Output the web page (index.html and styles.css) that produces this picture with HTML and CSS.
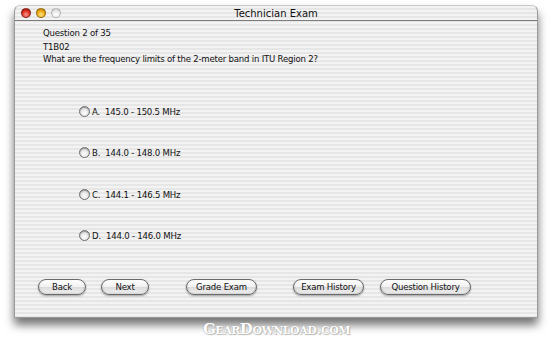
FILE: index.html
```html
<!DOCTYPE html>
<html lang="en">
<head>
    <meta charset="UTF-8">
    <title>Technician Exam</title>
    <link rel="stylesheet" href="styles.css">
</head>
<body>
    <div class="window">
        <div class="titlebar">
            <div class="lights">
                <span class="light red"></span>
                <span class="light yellow"></span>
                <span class="light gray"></span>
            </div>
            <div class="title">Technician Exam</div>
        </div>
        <div class="content">
            <p class="counter">Question 2 of 35</p>
            <p class="code">T1B02</p>
            <p class="question">What are the frequency limits of the 2-meter band in ITU Region 2?</p>

            <div class="answers">
                <label class="answer"><span class="radio"></span>A.&nbsp; 145.0 - 150.5 MHz</label>
                <label class="answer"><span class="radio"></span>B.&nbsp; 144.0 - 148.0 MHz</label>
                <label class="answer"><span class="radio"></span>C.&nbsp; 144.1 - 146.5 MHz</label>
                <label class="answer"><span class="radio"></span>D.&nbsp; 144.0 - 146.0 MHz</label>
            </div>

            <div class="buttons">
                <button class="btn w48">Back</button>
                <button class="btn w48 gap-s">Next</button>
                <button class="btn w71 gap-l">Grade Exam</button>
                <button class="btn w71 gap-m">Exam History</button>
                <button class="btn w91 gap-t">Question History</button>
            </div>
        </div>
    </div>
    <div class="watermark">GearDownload.com</div>
</body>
</html>
```

FILE: styles.css
```css
body { margin: 0; background: #fff; font-family: "DejaVu Sans Condensed", "DejaVu Sans", sans-serif; font-size: 9.5px; letter-spacing: -0.2px; color: #111; }

.window {
    margin: 5px 0 0 14px;
    width: 522px;
    height: 311px;
    border: 1px solid #9a9a9a;
    border-top-color: #c8c8c8;
    border-radius: 6px 6px 0 0;
    background: repeating-linear-gradient(#f3f3f3 0 2px, #e6e6e6 2px 4px);
    box-shadow: 0 7px 10px rgba(0, 0, 0, 0.55);
    display: flex;
    flex-direction: column;
    overflow: hidden;
}

.titlebar {
    height: 14px;
    border-bottom: 1px solid #7c7c7c;
    display: flex;
    align-items: center;
    position: relative;
}
.lights { display: flex; gap: 5px; padding-left: 6px; }
.light { width: 10px; height: 10px; border-radius: 50%; border: 1px solid rgba(0,0,0,0.35); box-sizing: border-box; }
.red { background: radial-gradient(circle at 50% 70%, #ff9a8e, #d2281c 60%, #9a1208); }
.yellow { background: radial-gradient(circle at 50% 70%, #ffe680, #e8a20c 60%, #a86c00); }
.gray { background: radial-gradient(circle at 50% 70%, #ffffff, #e4e4e4 60%, #b8b8b8); border-color: rgba(0,0,0,0.2); }
.title { position: absolute; left: 0; right: 0; text-align: center; font-family: "DejaVu Sans", sans-serif; font-size: 10px; letter-spacing: 0; color: #111; }

.content { flex: 1; padding: 6px 0 0 28px; display: flex; flex-direction: column; }
.content p { margin: 0; line-height: 12px; }
.counter { margin-bottom: 2px !important; }

.answers { display: flex; flex-direction: column; gap: 29.6px; margin: 40px 0 0 36px; }
.answer { display: flex; align-items: center; height: 12px; gap: 2px; }
.radio {
    width: 9px; height: 9px; border-radius: 50%;
    border: 1px solid #6e6e6e;
    background: radial-gradient(circle at 50% 65%, #ffffff, #dcdcdc 70%, #b0b0b0);
    box-shadow: inset 0 1px 1px rgba(0,0,0,0.3);
}

.buttons { display: flex; margin: 37px 0 0 -5px; }
.btn {
    height: 16px;
    padding: 0;
    border: 1px solid #6a6a6a;
    border-radius: 8px;
    background: linear-gradient(#ffffff, #f0f0f0 50%, #dadada 51%, #f4f4f4);
    box-shadow: 0 1px 2px rgba(0,0,0,0.35), inset 0 -1px 2px rgba(0,0,0,0.15);
    font-family: inherit;
    font-size: 9.5px;
    letter-spacing: -0.2px;
    color: #111;
}
.w48 { width: 48px; }
.w71 { width: 71px; }
.w91 { width: 91px; }
.gap-s { margin-left: 15px; }
.gap-l { margin-left: 37px; }
.gap-m { margin-left: 36px; }
.gap-t { margin-left: 16px; }

.watermark {
    margin: 2px 0 0 203px;
    font-family: "DejaVu Serif", serif;
    font-variant: small-caps;
    font-weight: bold;
    font-size: 15px;
    letter-spacing: -0.5px;
    color: #fff;
    text-shadow: 0 0 1px #888, 1px 1px 1px #bbb;
}
```
